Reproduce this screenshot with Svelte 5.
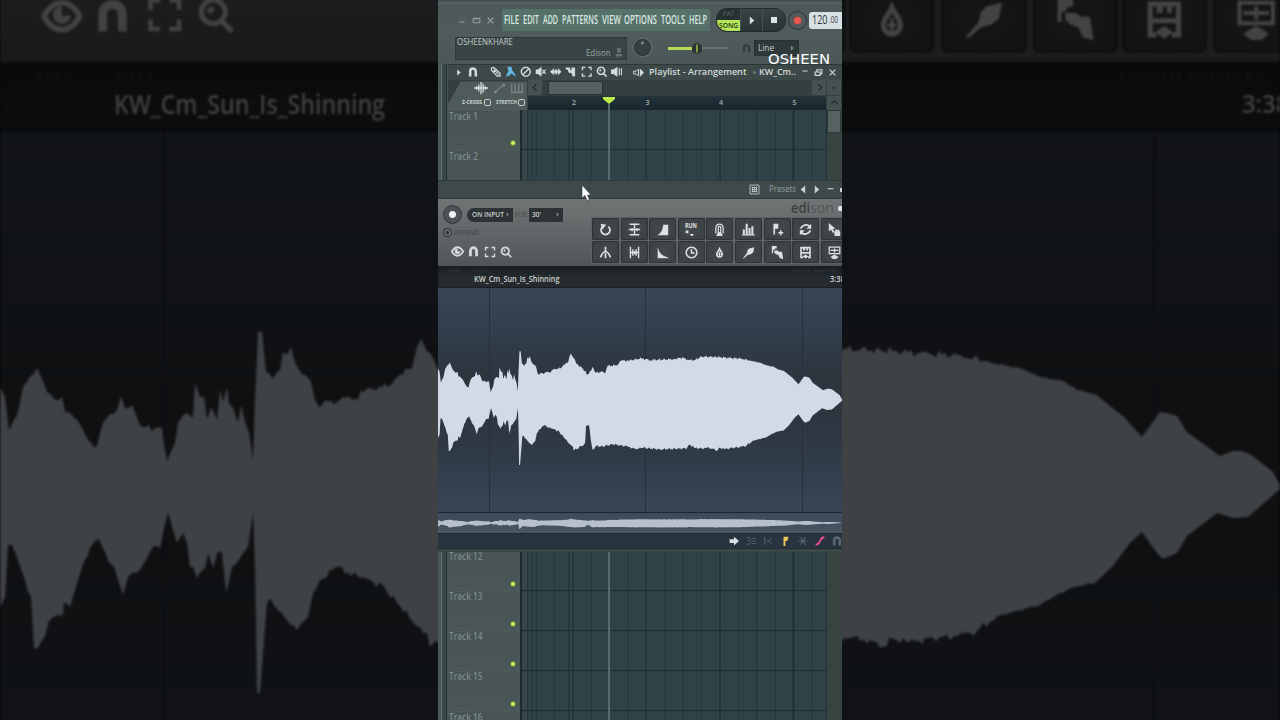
<script lang="ts">
  type Glyph = { fill?: string; line?: string; w?: number };

  // all glyphs live on a 16x16 grid
  const glyphs: Record<string, Glyph> = {
    minimize: { line: 'M3 12h10', w: 2 },
    maximize: { line: 'M2 4h12v8H2zM2 5h12', w: 1.6 },
    restore: { line: 'M2 7h9v6H2zM5 6V3h9v7h-2', w: 2 },
    close: { line: 'M3 3l10 10M13 3L3 13', w: 2 },
    right: { fill: 'M5 1l8 7-8 7z' },
    left: { fill: 'M11 1L3 8l8 7z' },
    chevLeft: { line: 'M10 2L4 8l6 6', w: 2 },
    chevRight: { line: 'M6 2l6 6-6 6', w: 2 },
    chevUp: { line: 'M2 11l6-6 6 6', w: 2 },
    magnet: { line: 'M3.5 15V7a4.5 4.5 0 0 1 9 0v8', w: 4 },
    pencil: { line: 'M2 3l3-1 9 8v4h-4L2 6zM5 5l7 7M9 4l-4 4', w: 1.7 },
    brush: { fill: 'M3 1h6l1 5 3 4 3 5-4-2-3-3-2 3-6 2 2-5 2-3z' },
    forbid: { line: 'M8 1.8a6.2 6.2 0 1 0 .1 0M12.5 3.5l-9 9', w: 1.9 },
    mute: { fill: 'M1 5h3l5-4v14l-5-4H1z', line: 'M10 5l5 6M15 5l-5 6', w: 1.6 },
    slip: { fill: 'M0 8l5-5v3.5h1.5V3L8 6l1.5-3v3.5H11V3l5 5-5 5V9.5H9.5V13L8 10l-1.5 3V9.5H5V13z' },
    slice: { fill: 'M1 2h6v3l2 1V2h5v12l-3 1-2-5-4-1-1-3-3-2z' },
    select: { line: 'M2 6V2h4M10 2h4v4M14 10v4h-4M6 14H2v-4', w: 1.9 },
    zoom: { line: 'M7 1.8a5 5 0 1 0 .1 0M11 11l4 4M5 7l2-2', w: 2.2 },
    playback: { fill: 'M0 5h3l6-4v14l-6-4H0z', line: 'M11.5 3v10M14.5 3v10', w: 1.6 },
    speaker: { fill: 'M10 2l6 6-6 6z', line: 'M8 3v10L5 10H1V6h4z', w: 1.4 },
    wave: { line: 'M0 8h16M3 6v4M5.5 4v8M8 1v14M10.5 3v10M13 6v4', w: 1.5 },
    automation: { line: 'M2 13L13 3', fill: 'M0 11h4v4H0zM12 1h4v4h-4z', w: 1.5 },
    piano: { line: 'M1 2v12h14V2M5.5 2v8M10.5 2v8M5.5 10v4M10.5 10v4', w: 1.7 },
    eye: { line: 'M1 8c4-7 10-7 14 0-4 7-10 7-14 0z', fill: 'M8 4a3.5 3.5 0 1 0 3.5 3.5L8 8z', w: 2.2 },
    mic: { fill: 'M5 1h6v8H5zM3 11h10v4H3z' },
    grid: { line: 'M1.5 1.5h13v13h-13zM5 4v8M8 4v8M11 4v8M4 5h8M4 8h8M4 11h8', w: 1.2 },
    loop: { line: 'M4.5 4.5a5.5 5.5 0 1 0 7 0', fill: 'M2 1l7 1-5 6z', w: 2.2 },
    normalize: { line: 'M2 1.5h12M2 14.5h12M1 8h14M5 6v4M8 2v12M11 6v4', w: 1.7 },
    fadeIn: { fill: 'M1 15c5-2 7-6 8-13h6v13z' },
    run: { fill: 'M1 8h4v4H1zM7 13h6l-2 3H9z' },
    ring: { line: 'M3.5 13V6c1-6 8-6 9 0v7M6.5 11V6c0-2.5 3-2.5 3 0v5', fill: 'M6 11h4l2 5H4z', w: 1.5 },
    bars: { fill: 'M1 8h2.5v6H1zM4.5 1H7v13H4.5zM8 6h2.5v8H8zM11.5 4H14v10h-2.5zM0 14h16v1.5H0z' },
    flagPlus: { fill: 'M3 1h6v6H5v7H3z', line: 'M12 9v6M9 12h6', w: 2 },
    convert: { line: 'M2 7c2-5 8-6 11-3M14 9c-2 5-8 6-11 3', fill: 'M15 1v6H9zM1 15V9h6z', w: 2.2 },
    pick: { fill: 'M1 0l8 7-3 .3 2 4-2 1-2-4-3 2zM8 10h7v6H8z', line: 'M9.5 11V9h3.5v2', w: 1.6 },
    claw: { line: 'M8 1v7M8 6C5 8 3 10 2 14M8 6c3 2 5 4 6 8M8 9v6', w: 2.1 },
    split: { line: 'M3 1v14M13 1v14M3 8h10M6 4v8M8 6v4M10 4v8', w: 1.7 },
    fadeOut: { fill: 'M2 1c2 8 5 11 13 13v1H2z' },
    clock: { line: 'M8 1.5a6.5 6.5 0 1 0 .1 0M8 4v4.5h4', w: 1.9 },
    drop: { line: 'M8 3.500C7 6 4.700 7.500 4.700 10.300a3.300 3.300 0 0 0 6.600 0C11.300 7.500 9 6 8 3.500z', fill: 'M7.400 7.500h1.200v2h1V11h-1v1.500H7.400V11h-1V9.500h1z', w: 2 },
    clean: { fill: 'M1 15l5-6 1-4 2-2 6-1.5-1 6-3 2.5-4 1-4 3.5-1.5.8z' },
    flagTake: { fill: 'M1 0h6v3H5l-1 2H2.500v4H1zM4 5.500h4l2 1.500h3.500l1.500 9-4-1-2-4-3-1-2-2z' },
    save: { line: 'M5 14H2.500V2h11v12H11M3 8.500h10', fill: 'M8 10.500l3.500 2.500L8 15.500 4.500 13zM5 2h2.500v3.500H5zM9 2h2v3.500H9z', w: 2 },
    sendDown: { line: 'M1.5 1.5h13v8h-13zM3 5.5h10M8 3v5', fill: 'M8 10.5l5 3-3 2.5H6l-3-2.5z', w: 1.5 },
    arrow: { fill: 'M1 5h7V1l8 7-8 7v-4H1z' },
    list: { line: 'M1 3h5l2 2-2 2H3M1 13h5l2-3-2-2M10 4h6M10 8h6M10 12h6', w: 1.4 },
    cut: { line: 'M3 2v12M6 8h3l5-5M9 8l5 5', w: 1.6 },
    flag: { fill: 'M4 1h8l-2 7H7v8H4z' },
    snow: { line: 'M1 8h14M4 2l8 12M12 2L4 14', w: 1.8 },
    curve: { line: 'M1 14c9 0 5-12 14-12', w: 3 },
  };

  const playlistTools = [
    ['pencil', ''], ['brush', 'blue'], ['forbid', ''], ['mute', ''], ['slip', ''],
    ['slice', ''], ['select', ''], ['zoom', ''], ['playback', ''],
  ];
  const edisonTools = [
    'loop', 'normalize', 'fadeIn', 'run', 'ring', 'bars', 'flagPlus', 'convert', 'pick',
    'claw', 'split', 'fadeOut', 'clock', 'drop', 'clean', 'flagTake', 'save', 'sendDown',
  ];
  const footerTools = [
    ['arrow', 'light'], ['list', ''], ['cut', ''], ['flag', 'yellow'], ['snow', ''],
    ['curve', 'pink'], ['magnet', ''],
  ];
  const bars = [2, 3, 4, 5];

  type Point = [number, number];

  const peaks: Point[] = [
    [0, 387], [5, 397], [9, 431], [17, 415], [23, 387], [30, 377], [37, 368], [41, 377], [47, 392],
    [55, 400], [62, 397], [65, 412], [77, 420], [88, 440], [97, 446], [103, 423], [117, 410],
    [121, 396], [125, 408], [132, 405], [142, 427], [162, 428], [164, 445], [167, 461], [175, 443],
    [178, 423], [187, 413], [193, 417], [195, 383], [200, 397], [204, 397], [207, 420], [211, 407],
    [217, 420], [220, 390], [223, 402], [227, 387], [229, 403], [233, 408], [238, 423], [241, 405],
    [245, 422], [249, 433], [253, 460], [255, 400], [258, 332], [262, 332], [266, 372], [273, 379],
    [280, 370], [283, 352], [287, 355], [291, 347], [295, 363], [305, 375], [311, 382], [315, 400],
    [319, 407], [325, 400], [337, 402], [343, 397], [352, 400], [370, 388], [388, 387], [397, 377],
    [412, 368], [417, 347], [421, 339], [430, 353], [438, 370], [469, 397], [471, 407], [485, 394],
    [490, 381], [500, 400], [522, 397], [530, 402], [537, 379], [569, 376], [580, 362], [606, 362],
    [627, 357], [645, 355], [672, 360], [746, 357], [777, 352], [793, 360], [814, 360], [835, 349],
    [880, 350], [930, 354], [960, 355], [983, 361], [1023, 369], [1040, 377], [1063, 381],
    [1077, 390], [1095, 394], [1123, 416], [1142, 437], [1160, 412], [1167, 413], [1177, 416],
    [1187, 432], [1220, 456], [1233, 451], [1242, 451], [1250, 454], [1273, 472], [1280, 485],
  ];
  const troughs: Point[] = [
    [0, 607], [5, 597], [8, 545], [12, 545], [17, 557], [31, 597], [34, 648], [38, 648], [52, 618],
    [63, 615], [64, 602], [70, 607], [78, 580], [90, 548], [99, 539], [117, 577], [123, 595],
    [128, 577], [137, 573], [153, 547], [160, 548], [168, 512], [173, 530], [177, 543], [183, 533],
    [187, 543], [190, 567], [193, 567], [197, 578], [205, 568], [208, 553], [213, 568], [218, 551],
    [222, 553], [226, 593], [232, 567], [240, 558], [248, 547], [253, 512], [255, 567], [257, 693],
    [260, 693], [263, 653], [267, 603], [270, 598], [278, 610], [287, 620], [297, 630], [308, 617],
    [313, 593], [320, 580], [336, 567], [360, 578], [383, 585], [397, 603], [413, 622], [427, 633],
    [430, 647], [466, 626], [469, 568], [479, 568], [484, 613], [490, 645], [500, 632], [522, 634],
    [553, 627], [601, 634], [627, 643], [640, 637], [703, 643], [788, 640], [798, 628], [814, 639],
    [835, 640], [851, 638], [870, 640], [880, 648], [893, 639], [907, 643], [940, 637], [957, 636],
    [977, 631], [997, 616], [1040, 605], [1053, 597], [1073, 587], [1095, 583], [1113, 566],
    [1130, 543], [1142, 532], [1157, 553], [1163, 559], [1177, 553], [1187, 536], [1217, 513],
    [1233, 518], [1248, 517], [1280, 489],
  ];

  // fills long stretches with small sample-sized steps
  function roughen(points: Point[]): Point[] {
    const out: Point[] = [];
    points.forEach(([x, y], i) => {
      out.push([x, y]);
      const next = points[i + 1];
      if (!next || x > 1080) return;
      const steps = Math.floor((next[0] - x) / 3);
      const amp = x < 980 ? 4.5 : 1;
      for (let s = 1; s < steps; s++) {
        const t = s / steps;
        const px = x + (next[0] - x) * t;
        const noise = Math.sin(s * 2.4 + x) * Math.cos(s * 5.1);
        out.push([px, y + (next[1] - y) * t + amp * noise]);
      }
    });
    return out;
  }

  const outline = [...roughen(peaks), ...roughen(troughs).reverse()]
    .map(([x, y]) => `${x.toFixed(1)},${y.toFixed(1)}`)
    .join(' ');
</script>

{#snippet icon(name: string, size = 11, tone = '')}
  <svg class="icon {tone}" width={size} height={size} viewBox="0 0 16 16">
    {#if glyphs[name].line}
      <path d={glyphs[name].line} fill="none" stroke="currentColor" stroke-width={glyphs[name].w} />
    {/if}
    {#if glyphs[name].fill}
      <path d={glyphs[name].fill} fill="currentColor" />
    {/if}
  </svg>
{/snippet}

{#snippet label(text: string, width: number, size: number, tone = '')}
  <svg class="label {tone}" {width} height={size + 4}>
    <text x="0" y={size} font-size={size} textLength={width} lengthAdjust="spacingAndGlyphs" fill="currentColor">{text}</text>
  </svg>
{/snippet}

{#snippet waveform()}
  <svg class="waveform" viewBox="0 131.9 1280 709.6" preserveAspectRatio="none">
    <polygon points={outline} fill="currentColor" />
  </svg>
{/snippet}

{#snippet tracks(from: number, to: number)}
  {#each Array.from({ length: to - from + 1 }, (_, i) => from + i) as n (n)}
    <div class="track">
      <div class="track-head">
        {@render label(`Track ${n}`, n > 9 ? 33.5 : 29, 11)}
        {#if n !== to}
          <div class="track-foot"><span class="dots">...</span><span class="led"></span></div>
        {/if}
      </div>
      <div class="gutter"></div>
      <div class="lane"></div>
      <div class="track-end"></div>
    </div>
  {/each}
{/snippet}

{#snippet edison(mirror: boolean)}
  <div class="edison">
    <div class="ed-title">
      {#if !mirror}
        {@render icon('grid', 11)}
        {@render label('Presets', 27, 9, 'presets')}
        {@render icon('left', 9)}
        {@render icon('right', 9)}
        {@render icon('minimize', 9, 'ed-min')}
        <i class="ed-max"></i>
      {/if}
    </div>
    <div class="ed-tools">
      <div class="ed-left">
        {#if !mirror}
          <div class="ed-rec">
            <span class="big-rec"></span>
            <span class="field on-input">{@render label('ON INPUT', 32, 7.5)}{@render icon('right', 5)}</span>
            {@render label('FOR', 12, 7.5, 'faint')}
            <span class="field secs">{@render label("30'", 9, 7.5)}{@render icon('right', 5)}</span>
          </div>
          <div class="append"><i></i>{@render label('APPEND', 25, 7.5)}</div>
        {/if}
        <div class="ed-view">
          {@render icon('eye', 13)}
          {@render icon('magnet', 11)}
          {@render icon('select', 12)}
          {@render icon('zoom', 12)}
        </div>
      </div>
      <div class="ed-right">
        <div class="ed-logo">
          {#if !mirror}
            {@render label('edi', 19, 15, 'logo-a')}{@render label('son', 24, 15, 'logo-b')}<b></b>
          {/if}
        </div>
        <div class="ed-buttons">
          {#each edisonTools as name (name)}
            <div class="ed-btn">
              {#if name === 'run' && !mirror}
                <span class="run">{@render label('RUN', 12, 6.5)}{@render icon('run', 11)}</span>
              {:else}
                {@render icon(name, 13)}
              {/if}
            </div>
          {/each}
        </div>
      </div>
    </div>
    <div class="ed-info">
      <div class="captions">
        {@render label('AREA', 12, 4)}{@render label('TITLE', 13, 4)}
        {@render label('LENGTH', 20, 4)}{@render label('SAMPLES', 24, 4)}
      </div>
      <div class="values">
        {@render label('KW_Cm_Sun_Is_Shinning', 85.5, 8.4)}
        {@render label('3:38', 15, 8)}
      </div>
    </div>
    <div class="ed-wave">{@render waveform()}</div>
    {#if !mirror}
      <div class="overview">{@render waveform()}</div>
      <div class="ed-foot">
        {#each footerTools as [name, tone] (name)}
          {@render icon(name, 10, tone)}
        {/each}
      </div>
    {/if}
  </div>
{/snippet}

<div class="page">
  <div class="backdrop">
    <div class="magnified">{@render edison(true)}</div>
  </div>

  <main class="screen">
    <header>
      <div class="row main-row">
        <div class="win">
          {@render icon('minimize', 8)}{@render icon('maximize', 9)}{@render icon('close', 9)}
        </div>
        <nav>
          {@render label('FILE', 15, 12)}
          {@render label('EDIT', 16, 12)}
          {@render label('ADD', 15, 12)}
          {@render label('PATTERNS', 36, 12)}
          {@render label('VIEW', 19, 12)}
          {@render label('OPTIONS', 33, 12)}
          {@render label('TOOLS', 24, 12)}
          {@render label('HELP', 18, 12)}
        </nav>
        <div class="transport">
          <div class="mode">
            <span class="pat">{@render label('PAT', 11, 7)}</span>
            <span class="song">{@render label('SONG', 19, 7.5)}</span>
          </div>
          <div class="tbtn">{@render icon('right', 9)}</div>
          <div class="tbtn"><i class="stop"></i></div>
        </div>
        <div class="record"><i></i></div>
        <div class="tempo">{@render label('120', 15.5, 12)}{@render label('.00', 9, 9)}</div>
      </div>
      <div class="row hint-row">
        <div class="hint">
          {@render label('OSHEENKHARE', 56, 8.5)}
          <div class="hint-sub">{@render label('Edison', 24.5, 8.5)}{@render icon('mic', 10)}</div>
        </div>
        <div class="knob"></div>
        <div class="slider"><div class="fill"></div><div class="thumb"></div><div class="rest"></div></div>
        <div class="horn">{@render icon('magnet', 9)}</div>
        <div class="snap">{@render label('Line', 16, 9)}{@render icon('right', 6)}</div>
      </div>
      <div class="watermark">{@render label('OSHEEN', 62, 14.5)}</div>
    </header>

    <section class="playlist top">
      <div class="pl-title">
        {@render icon('right', 7)}
        {@render icon('magnet', 10, 'snap-icon')}
        <div class="pl-tools">
          {#each playlistTools as [name, tone] (name)}
            {@render icon(name, 11.5, tone)}
          {/each}
        </div>
        {@render icon('speaker', 11)}
        {@render label('Playlist - Arrangement', 97.5, 9.5, 'pl-name')}
        {@render icon('right', 5, 'dim')}
        {@render label('KW_Cm..', 37, 9.5, 'pl-clip')}
        <div class="pl-win">
          {@render icon('minimize', 8, 'up')}{@render icon('restore', 9)}{@render icon('close', 9)}
        </div>
      </div>
      <div class="pl-head">
        <div class="tab">
          <div class="tab-icons">
            {@render icon('wave', 14)}{@render icon('automation', 11, 'dim')}{@render icon('piano', 12, 'dim')}
          </div>
          <div class="tab-checks">
            {@render label('Z-CROSS', 20, 5.5)}<i></i>{@render label('STRETCH', 21, 5.5)}<i></i>
          </div>
        </div>
        <div class="timeline">
          <div class="scroll">
            <span class="sbtn">{@render icon('chevLeft', 9)}</span>
            <span class="sthumb"></span>
            <span class="sbtn">{@render icon('chevRight', 9)}</span>
          </div>
          <div class="ruler">
            {#each bars as n (n)}
              <span>{n}</span>
            {/each}
          </div>
        </div>
        <div class="corner"><span class="sbtn">•</span><span class="sbtn">{@render icon('chevUp', 9)}</span></div>
      </div>
      <div class="track-list">{@render tracks(1, 2)}</div>
      <div class="vthumb"></div>
      <div class="playhead"></div>
      <div class="marker"></div>
    </section>

    {@render edison(false)}

    <section class="playlist bottom">
      <div class="track-list">{@render tracks(12, 16)}</div>
      <div class="playhead"></div>
    </section>

    <svg class="cursor" width="12" height="18" viewBox="0 0 12 18">
      <path d="M1 1v13l3-2.5 2 5 2.5-1-2-4.5H10z" fill="#fff" stroke="#293335" stroke-width=".6" />
    </svg>
  </main>
</div>

<style>
  :global(body) {
    background: #0c1013;
    overflow: hidden;
  }

  .page {
    position: relative;
    width: 1280px;
    height: 720px;
    overflow: hidden;
    display: flex;
    justify-content: center;
    font-family: 'Open Sans', 'Noto Sans', sans-serif;
    color: #d5dddd;
  }

  .icon,
  .label {
    display: block;
    flex: none;
  }

  .label {
    overflow: visible;
  }

  /* magnified, dimmed copy of the editor behind the portrait frame */
  .backdrop {
    position: absolute;
    inset: 0;
    overflow: hidden;
    background: #000;
  }

  .magnified {
    position: absolute;
    left: 438px;
    top: 180px;
    width: 404px;
    transform: scale(3.168);
    transform-origin: 202px 180px;
    filter: blur(0.35px) brightness(0.3) saturate(0.7);
  }

  .screen {
    position: relative;
    width: 404px;
    height: 720px;
    overflow: hidden;
    display: flex;
    flex-direction: column;
    background: #465353;
  }

  header {
    position: relative;
    box-sizing: border-box;
    height: 64px;
    padding-top: 8px;
    background: linear-gradient(#3c4747 0, #566262 3px, #4c5858 5px, #505c5c 35px, #4b5757 100%);
    z-index: 2;
  }

  .row {
    display: flex;
    align-items: center;
  }

  .main-row {
    height: 24px;
  }

  .win {
    display: flex;
    gap: 5.5px;
    align-items: center;
    padding-left: 20px;
    width: 45px;
    color: #9ba7a6;
  }

  nav {
    display: flex;
    align-items: center;
    gap: 3.9px;
    box-sizing: border-box;
    width: 208px;
    height: 22px;
    flex: none;
    padding-left: 2px;
    background: #557169;
    color: #dce8e3;
    font-weight: 600;
  }

  .transport {
    display: flex;
    flex: none;
    width: 70px;
    height: 24px;
    margin-left: 6px;
    border-radius: 11px;
    overflow: hidden;
    background: #293232;
    border: 1px solid #222b2b;
    box-sizing: border-box;
  }

  .mode {
    width: 23px;
  }

  .pat,
  .song {
    display: flex;
    justify-content: center;
    height: 11px;
    color: #566060;
  }

  .song {
    background: #b4e65a;
    color: #263314;
    font-weight: 600;
  }

  .tbtn {
    width: 22px;
    display: grid;
    place-items: center;
    border-left: 1px solid #455050;
    background: linear-gradient(#394343, #2a3333);
  }

  .stop {
    width: 5.5px;
    height: 5.5px;
    background: #dce3e3;
  }

  .record {
    flex: none;
    width: 19px;
    height: 19px;
    display: grid;
    place-items: center;
    margin-left: 2px;
    border-radius: 50%;
    background: #505a5b;
    box-shadow: inset 0 0 0 1px #2e3737;
  }

  .record i {
    width: 7px;
    height: 7px;
    border-radius: 50%;
    background: #e8584c;
    box-shadow: 0 0 2px #c9453a;
  }

  .tempo {
    display: flex;
    align-items: center;
    gap: 1px;
    margin-left: 2px;
    padding-left: 3px;
    width: 30px;
    height: 17px;
    flex: none;
    border-radius: 3px 0 0 3px;
    background: #d7e0e3;
    color: #30383b;
  }

  .hint-row {
    height: 26px;
    padding-top: 3px;
  }

  .hint {
    box-sizing: border-box;
    width: 172px;
    height: 23px;
    margin-left: 17px;
    padding: 0 2px;
    background: #394444;
    border: 1px solid #2f3939;
    color: #c0caca;
  }

  .hint > :global(.label) {
    margin: -2px 0 0 -1px;
  }

  .hint-sub {
    display: flex;
    justify-content: flex-end;
    gap: 4px;
    margin-top: -1px;
    color: #9aa6a6;
  }

  .hint-sub .icon {
    color: #667272;
  }

  .knob {
    width: 15px;
    height: 15px;
    margin-left: 7px;
    margin-top: -2px;
    border-radius: 50%;
    background: radial-gradient(circle at 50% 20%, #798484 0 1px, #344040 2px);
    border: 1px solid #262f30;
    box-shadow: 0 0 0 1.5px #5d6969;
  }

  .slider {
    display: flex;
    align-items: center;
    width: 60px;
    margin-left: 17px;
  }

  .fill {
    width: 24px;
    height: 3px;
    background: #b4dc57;
  }

  .thumb {
    width: 2px;
    height: 9px;
    background: #86a243;
    border: 4px solid #2b3434;
    border-width: 1px 4px;
    border-radius: 5px;
  }

  .rest {
    flex: 1;
    height: 2px;
    background: #697575;
  }

  .horn {
    width: 10px;
    margin-left: 14px;
    color: #323c3c;
  }

  .snap {
    display: flex;
    align-items: center;
    justify-content: space-between;
    box-sizing: border-box;
    width: 45px;
    height: 16px;
    margin-left: 2px;
    padding: 0 3px;
    background: #2f3839;
    border: 1px solid #283132;
    color: #c7d0d0;
  }

  .snap .icon {
    color: #788484;
  }

  .watermark {
    position: absolute;
    left: 330px;
    top: 49px;
    color: #fff;
    font-family: 'DejaVu Sans', sans-serif;
  }

  .playlist {
    position: relative;
    box-sizing: border-box;
    padding-left: 10px;
    overflow: hidden;
    background: linear-gradient(90deg, #4a5858 0 3px, #647272 3px 4px, #3b4848 4px 8px, #2a3535 8px 9px, #465252 9px);
  }

  .top {
    height: 116px;
  }

  .bottom {
    flex: 1;
  }

  .bottom .track-list {
    margin-top: -1.5px;
  }

  .pl-title {
    display: flex;
    align-items: center;
    height: 16px;
    padding: 0 0 1px 7px;
    background: #3d4949;
    border-top: 1px solid #2c3636;
    box-sizing: border-box;
    color: #d3dbda;
    font-weight: 600;
  }

  .pl-title :global(.snap-icon) {
    margin-left: 6px;
  }

  .pl-tools {
    display: flex;
    gap: 3.6px;
    margin: 0 11px 0 12px;
  }

  .pl-title :global(.pl-name) {
    margin: 0 5px 0 5px;
  }

  .pl-title :global(.pl-clip) {
    margin-left: 2px;
  }

  .pl-win {
    display: flex;
    gap: 5px;
    margin-left: 5px;
  }

  .up {
    margin-top: -3px;
  }

  .blue {
    color: #62b5e4;
  }

  .dim {
    color: #7a8585;
  }

  .pl-head {
    display: flex;
    height: 30px;
    background: #333e3f;
  }

  .tab {
    width: 79px;
    flex: none;
    background: #4f5a5a;
    clip-path: polygon(16% 5%, 100% 5%, 100% 100%, 0 100%, 0 80%);
  }

  .tab-icons {
    display: flex;
    align-items: center;
    justify-content: space-between;
    height: 16px;
    padding: 0 4px 0 26px;
  }

  .tab-checks {
    display: flex;
    align-items: center;
    gap: 1px;
    height: 14px;
    padding-left: 14px;
    color: #cdd5d4;
    font-weight: bold;
  }

  .tab-checks i {
    width: 5px;
    height: 5px;
    border: 1px solid #c3cccb;
    border-radius: 2px;
    margin: -1px 4px 0 0.5px;
    flex: none;
  }

  .timeline {
    width: 298px;
    margin-left: 1px;
    flex: none;
  }

  .scroll {
    display: flex;
    height: 16px;
    background: #353f40;
  }

  .scroll .sbtn:last-child {
    margin-left: auto;
  }

  .sbtn {
    width: 14px;
    height: 15px;
    display: grid;
    place-items: center;
    background: #465152;
    color: #20292a;
    font-size: 9px;
  }

  .sthumb {
    width: 55px;
    height: 14px;
    margin: 1px 0 0 6px;
    background: #566162;
    border: 1px solid #293233;
    box-sizing: border-box;
  }

  .ruler {
    display: flex;
    box-sizing: border-box;
    height: 14px;
    padding-left: 44px;
    background: linear-gradient(#25333b, #18262d);
    color: #a2adb0;
    font-size: 7px;
    font-weight: 600;
    line-height: 14px;
  }

  .ruler span {
    width: 73.5px;
    flex: none;
  }

  .corner {
    width: 15px;
    display: flex;
    flex-direction: column;
    gap: 1px;
    margin-left: 1px;
  }

  .vthumb {
    position: absolute;
    left: 389px;
    top: 46px;
    width: 14px;
    height: 23px;
    background: #566161;
    border: 1px solid #2f3939;
    box-sizing: border-box;
  }

  .track {
    display: flex;
    height: 40.15px;
  }

  .track-head {
    box-sizing: border-box;
    width: 71.5px;
    flex: none;
    padding: 0 3px 0 1px;
    background: linear-gradient(#485454, #4b5757);
    border-top: 1px solid #4f5b5b;
    color: #7b8988;
    font-weight: 600;
  }

  .track-head > :global(.label) {
    margin-top: -2.5px;
  }

  .track-foot {
    display: flex;
    justify-content: space-between;
    align-items: center;
    margin-top: 16.5px;
    padding-left: 9px;
  }

  .dots {
    font-size: 8px;
    line-height: 8px;
    margin-top: -2px;
    color: #323c3c;
  }

  .led {
    width: 4px;
    height: 4px;
    border-radius: 50%;
    background: #c6f266;
    border: 1.5px solid #60842f;
    margin-right: 0.5px;
  }

  .gutter {
    width: 8.5px;
    box-sizing: border-box;
    flex: none;
    background: #38464a;
    border-left: 2px solid #1f2b2f;
    border-right: 1px solid #2a383d;
    border-bottom: 1px solid #1d2b31;
  }

  .lane {
    width: 298px;
    flex: none;
    box-sizing: border-box;
    border-bottom: 1.5px solid #1d2c32;
    background:
      repeating-linear-gradient(90deg, #1f2f36 0 1px, transparent 1px 73.5px) 44.5px 0,
      repeating-linear-gradient(90deg, #26383f 0 1px, transparent 1px 18.375px) 7.75px 0,
      repeating-linear-gradient(90deg, #2c3f45 0 1px, transparent 1px 4.594px) 3.156px 0,
      #2f4349;
  }

  .track-end {
    flex: 1;
    background: #38443f;
    border-left: 1px solid #253033;
  }

  .playhead {
    position: absolute;
    left: 170px;
    top: 40px;
    bottom: 0;
    width: 2px;
    background: #566b70;
  }

  .bottom .playhead {
    top: 0;
  }

  .marker {
    position: absolute;
    left: 165px;
    top: 33px;
    width: 12px;
    height: 7px;
    background: #bdf04e;
    clip-path: polygon(0 0, 100% 0, 100% 30%, 50% 100%, 0 30%);
  }

  .edison {
    position: relative;
    height: 372px;
    flex: none;
    overflow: hidden;
    background: #3c4848;
    font-size: 8px;
  }

  .ed-title {
    display: flex;
    align-items: center;
    box-sizing: border-box;
    height: 19px;
    padding-left: 311px;
    background: #3e4949;
    border-top: 1px solid #2c3737;
    border-bottom: 1px solid #313b3c;
    color: #c9d1d1;
    gap: 4px;
  }

  .ed-title :global(.presets) {
    color: #98a3a3;
    margin: 0 -1px 0 5px;
  }

  .ed-title :global(.ed-min) {
    margin: -7px 0 0 1px;
  }

  .ed-max {
    width: 5px;
    height: 4px;
    margin-left: 1px;
    background: #c9d1d1;
    flex: none;
  }

  .ed-tools {
    display: flex;
    height: 67px;
    background: linear-gradient(#6f7475, #696e6f 25%, #505658);
  }

  .ed-left {
    width: 153px;
    flex: none;
    display: flex;
    flex-direction: column;
  }

  .ed-rec {
    display: flex;
    align-items: center;
    height: 20px;
    padding: 6px 0 0 4.5px;
    gap: 2px;
  }

  .big-rec {
    box-sizing: border-box;
    width: 19px;
    height: 19px;
    flex: none;
    margin-right: 3px;
    border-radius: 50%;
    border: 1.5px solid #2f3536;
    background: radial-gradient(circle, #f1f4f4 0 3px, #4d5355 4px);
  }

  .field {
    display: flex;
    align-items: center;
    justify-content: space-between;
    box-sizing: border-box;
    flex: none;
    height: 14px;
    padding: 0 3px 0 5px;
    background: #2d3334;
    color: #cbd2d2;
    font-weight: 600;
  }

  .field .icon {
    color: #7a8283;
  }

  .on-input {
    width: 46px;
    border-radius: 7px 0 0 7px;
  }

  .secs {
    width: 34px;
    padding-left: 3px;
  }

  .faint {
    color: #414748;
  }

  .append {
    display: flex;
    align-items: center;
    height: 12px;
    margin-top: 3px;
    padding-left: 6px;
    gap: 3px;
    color: #3c4243;
  }

  .append i {
    width: 3px;
    height: 3px;
    border-radius: 50%;
    background: #252b2c;
    border: 2px solid #64696a;
    box-shadow: 0 0 0 1px #303637;
  }

  .ed-view {
    display: flex;
    align-items: center;
    margin-top: auto;
    height: 28px;
    padding: 0 0 1px 12.5px;
    gap: 4.5px;
    color: #d5dada;
  }

  .ed-right {
    width: 258px;
    flex: none;
  }

  .ed-logo {
    display: flex;
    height: 18px;
    padding-left: 200px;
    align-items: flex-start;
  }

  .ed-logo b {
    width: 6px;
    height: 5px;
    margin: 7px 0 0 4px;
    border-radius: 2px;
    background: #e2e7e7;
  }

  .logo-a {
    color: #3b4041;
    font-weight: 600;
    margin-top: -1px;
  }

  .logo-b {
    color: #505556;
    margin-top: -1px;
  }

  .ed-buttons {
    display: grid;
    grid-template-columns: repeat(9, 27.1px);
    grid-template-rows: 22px 22px;
    gap: 1px 1.5px;
    padding: 1px;
    background: #5d6365;
    height: 45px;
  }

  .ed-btn {
    display: grid;
    place-items: center;
    border-radius: 2px;
    background: radial-gradient(#44494b, #3a4042);
    box-shadow: inset 0 0 0 1px #2e3436;
    color: #dbe0e0;
  }

  .run {
    display: flex;
    flex-direction: column;
    font-weight: bold;
  }

  .run > :global(.icon) {
    margin-top: -6px;
  }

  .run > :global(.label) {
    margin-top: -1px;
  }

  .ed-info {
    position: relative;
    box-sizing: border-box;
    height: 22px;
    background: linear-gradient(#181d20, #262c2f 60%, #23292c);
    border-bottom: 1px solid #182026;
    padding-top: 2px;
    color: #ccd2d2;
    font-weight: 600;
  }

  .captions {
    display: grid;
    grid-template-columns: 25px 317px 22px 24px;
    padding-left: 11px;
    height: 6.2px;
    color: #30383b;
  }

  .values {
    display: flex;
    justify-content: space-between;
    padding-left: 36px;
    margin-right: -3px;
  }

  .ed-wave {
    height: 224px;
    color: #d0dbe6;
    border-bottom: 1px solid #1d2630;
    background:
      linear-gradient(90deg, transparent 51px, #26303c 51px 52px, transparent 52px 207px, #26303c 207px 208px, transparent 208px 364px, #26303c 364px 365px, transparent 365px),
      linear-gradient(#394556, #323d4b 22%, #2c363f 38% 57%, #303b48 76%, #3a4657);
  }

  .waveform {
    display: block;
    width: 100%;
    height: 100%;
  }

  .overview {
    height: 20px;
    color: #b7c1cb;
    background: linear-gradient(#3c4959, #4b5664);
  }

  .ed-foot {
    display: flex;
    align-items: center;
    gap: 7.2px;
    box-sizing: border-box;
    height: 16px;
    padding-left: 291px;
    background: #293441;
    border-top: 1px solid #1f2935;
    border-bottom: 1px solid #1f2935;
    color: #5c6774;
  }

  .light {
    color: #d7dde2;
  }

  .yellow {
    color: #ecc95a;
  }

  .pink {
    color: #e84c94;
  }

  .cursor {
    position: absolute;
    left: 143px;
    top: 184px;
  }
</style>
